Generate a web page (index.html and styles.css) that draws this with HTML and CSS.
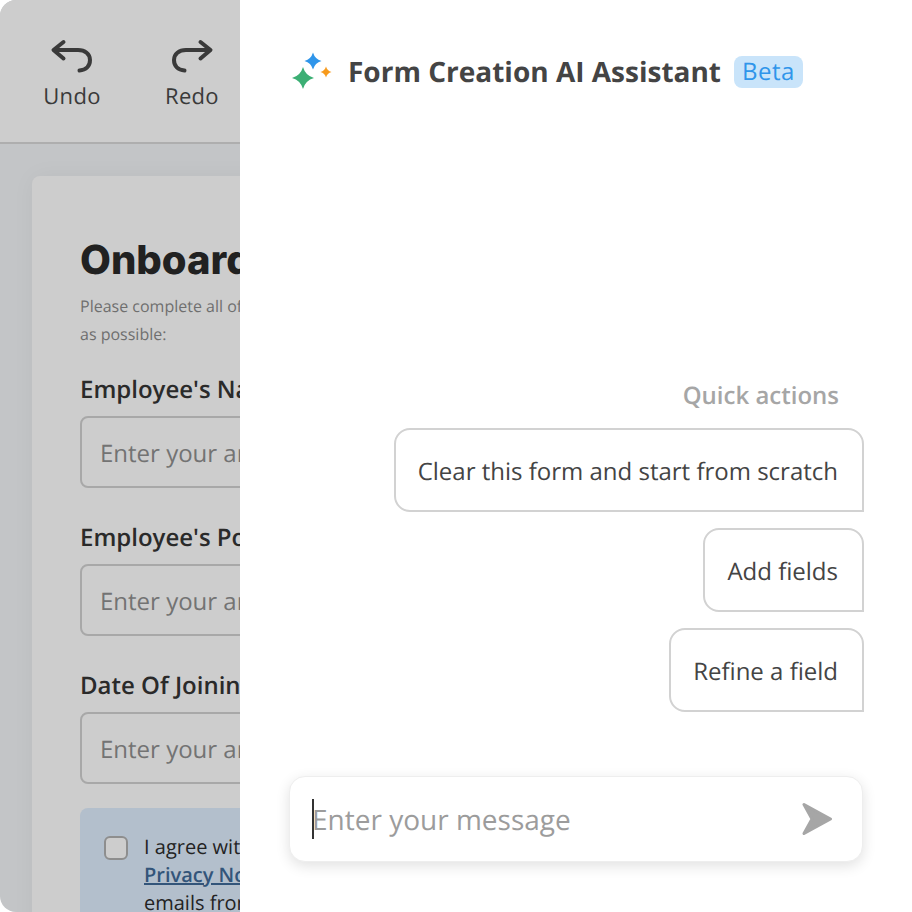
FILE: index.html
```html
<!DOCTYPE html>
<html lang="en">

<head>
  <meta charset="utf-8">
  <title>Form Creation AI Assistant</title>

  <link rel="stylesheet" href="styles.css">
</head>

<body>
  <div class="stage">

    <div class="editor">
      <div class="toolbar">
        <div class="tool">
          <svg class="tool-icon" viewBox="0 0 44 36" width="44" height="36">
            <path d="M13.500 5 L3.500 13 L13.500 21.500 M4 13 H28 C35 13 40 17 40 23 C40 29 36 33 29.500 33.500" />
          </svg>
          <span>Undo</span>
        </div>
        <div class="tool">
          <svg class="tool-icon" viewBox="0 0 44 36" width="44" height="36">
            <path d="M30.500 5 L40.500 13 L30.500 21.500 M40 13 H16 C9 13 4 17 4 23 C4 29 8 33 14.500 33.500" />
          </svg>
          <span>Redo</span>
        </div>
      </div>

      <div class="canvas">
        <div class="card">
          <h1 class="form-title">Onboarding Form</h1>
          <p class="form-desc">Please complete all of the fields below as soon<br>as possible:</p>

          <div class="field">
            <label>Employee's Name</label>
            <div class="input">Enter your answer</div>
          </div>
          <div class="field">
            <label>Employee's Position</label>
            <div class="input">Enter your answer</div>
          </div>
          <div class="field">
            <label>Date Of Joining</label>
            <div class="input">Enter your answer</div>
          </div>

          <div class="consent">
            <span class="checkbox"></span>
            <p>I agree with the terms and the<br><a href="#">Privacy Notice</a> and to receive<br>emails from the company</p>
          </div>
        </div>
      </div>
    </div>

    <div class="panel">
      <div class="panel-head">
        <svg class="sparkle" viewBox="0 0 42 42" width="42" height="42">
          <path class="blue" d="M23 2.500 Q24.900 9.100 31.500 11 Q24.900 12.900 23 19.500 Q21.100 12.900 14.500 11 Q21.100 9.100 23 2.500 Z" />
          <path class="green" d="M13 17 Q15.400 25.600 24 28 Q15.400 30.400 13 39 Q10.600 30.400 2 28 Q10.600 25.600 13 17 Z" />
          <path class="orange" d="M36 16.500 Q37.200 20.800 41.500 22 Q37.200 23.200 36 27.500 Q34.800 23.200 30.500 22 Q34.800 20.800 36 16.500 Z" />
        </svg>
        <h2>Form Creation AI Assistant</h2>
        <span class="beta">Beta</span>
      </div>

      <div class="actions">
        <div class="actions-title">Quick actions</div>
        <button class="action">Clear this form and start from scratch</button>
        <button class="action">Add fields</button>
        <button class="action">Refine a field</button>
      </div>

      <div class="composer">
        <span class="caret"></span>
        <span class="placeholder">Enter your message</span>
        <svg class="send" viewBox="0 0 32 34" width="32" height="34">
          <path d="M2 2.500 L28.500 17 L2 31.500 L10 17 Z" />
        </svg>
      </div>
    </div>

  </div>
</body>

</html>
```

FILE: styles.css
```css
* {
	box-sizing: border-box;
}

body {
	margin: 0;
	background: #fff;
	font-family: "Open Sans", sans-serif;
	text-rendering: geometricPrecision;
}

.stage {
	display: flex;
	width: 912px;
	height: 912px;
	overflow: hidden;
}

/* left side, dimmed form editor */
.editor {
	width: 240px;
	height: 912px;
	flex-shrink: 0;
	overflow: hidden;
	background: #c3c5c7;
	border-radius: 16px 0 0 16px;
}

.toolbar {
	display: flex;
	height: 144px;
	padding-top: 37px;
	padding-left: 32px;
	gap: 40px;
	background: #cdcdcd;
	border-bottom: 2px solid #aeaeae;
}

.tool {
	display: flex;
	flex-direction: column;
	align-items: center;
	gap: 8px;
	width: 80px;
	font-size: 22px;
	font-weight: 500;
	letter-spacing: 0.3px;
	line-height: 30px;
	color: #3a3a3a;
}

.tool-icon {
	display: block;
	width: 44px;
	height: 36px;
	fill: none;
	stroke: #3a3a3a;
	stroke-width: 4;
	stroke-linecap: round;
	stroke-linejoin: round;
}

.canvas {
	padding: 32px 0 0 32px;
}

.card {
	width: 640px;
	height: 800px;
	padding: 56px 48px 0;
	background: #cdcdcd;
	border-radius: 8px 0 0 0;
	box-shadow: 0 0 24px rgba(0, 0, 0, 0.04);
}

.form-title {
	margin: 0;
	font-family: Inter, sans-serif;
	font-size: 40px;
	font-weight: 800;
	line-height: 56px;
	white-space: nowrap;
	color: #212121;
}

.form-desc {
	margin: 4px 0 26px;
	font-size: 16px;
	line-height: 28px;
	white-space: nowrap;
	color: #6f6f6f;
}

.field + .field {
	margin-top: 34px;
}

.field label {
	display: block;
	font-size: 24px;
	font-weight: 600;
	line-height: 32px;
	white-space: nowrap;
	color: #2a2a2a;
}

.input {
	width: 400px;
	height: 72px;
	margin-top: 10px;
	padding: 0 18px;
	border: 2px solid #a8a8a8;
	border-radius: 8px;
	font-size: 24px;
	line-height: 72px;
	color: #737373;
}

.consent {
	display: flex;
	gap: 16px;
	width: 500px;
	height: 200px;
	margin-top: 24px;
	padding: 25px 24px;
	background: #b3bfcc;
	border-radius: 8px;
}

.checkbox {
	flex-shrink: 0;
	width: 24px;
	height: 24px;
	margin-top: 3px;
	border: 2px solid #8e8e8e;
	border-radius: 6px;
	background: #cdcdcd;
}

.consent p {
	margin: 0;
	font-size: 20px;
	line-height: 28px;
	white-space: nowrap;
	color: #232323;
}

.consent a {
	font-weight: 600;
	color: #33557a;
}

/* right side, assistant */
.panel {
	display: flex;
	flex-direction: column;
	flex: 1;
	height: 912px;
	background: #fff;
}

.panel-head {
	display: flex;
	align-items: center;
	height: 42px;
	margin: 51px 0 0 50px;
}

.sparkle {
	flex-shrink: 0;
	margin-top: -2px;
	margin-right: 16px;
}

.sparkle .blue {
	fill: #2f95ea;
}

.sparkle .green {
	fill: #3caf74;
}

.sparkle .orange {
	fill: #f79a1c;
}

.panel-head h2 {
	margin: 0;
	font-size: 28px;
	font-weight: 700;
	color: #444;
}

.beta {
	margin-left: 13px;
	padding: 0 8px;
	height: 32px;
	font-size: 24px;
	letter-spacing: 0.500px;
	line-height: 32px;
	color: #2f95ea;
	background: #c9e4fa;
	border-radius: 8px;
}

.actions {
	display: flex;
	flex-direction: column;
	align-items: flex-end;
	margin-top: 286px;
	padding-right: 48px;
}

.actions-title {
	padding-right: 25px;
	margin-bottom: 16px;
	font-size: 24px;
	font-weight: 600;
	line-height: 33px;
	color: #a6a6a6;
}

.action {
	height: 84px;
	margin-bottom: 16px;
	padding: 2px 24px 0 22px;
	font-family: inherit;
	font-size: 24px;
	text-rendering: geometricPrecision;
	color: #444;
	background: #fff;
	border: 2px solid #d2d2d2;
	border-radius: 16px 16px 0 16px;
}

.composer {
	display: flex;
	align-items: center;
	width: 574px;
	height: 86px;
	margin: 48px 0 0 49px;
	padding: 0 28px 0 22px;
	border: 1px solid #eee;
	border-radius: 16px;
	background: #fff;
	box-shadow: 0 4px 14px rgba(0, 0, 0, 0.12);
}

.caret {
	flex-shrink: 0;
	width: 2px;
	height: 40px;
	background: #333;
}

.placeholder {
	flex: 1;
	margin-left: -2px;
	padding-top: 2px;
	font-size: 28px;
	color: #9c9c9c;
}

.send {
	fill: #a6a6a6;
	stroke: #a6a6a6;
	stroke-width: 3;
	stroke-linejoin: round;
}
```
